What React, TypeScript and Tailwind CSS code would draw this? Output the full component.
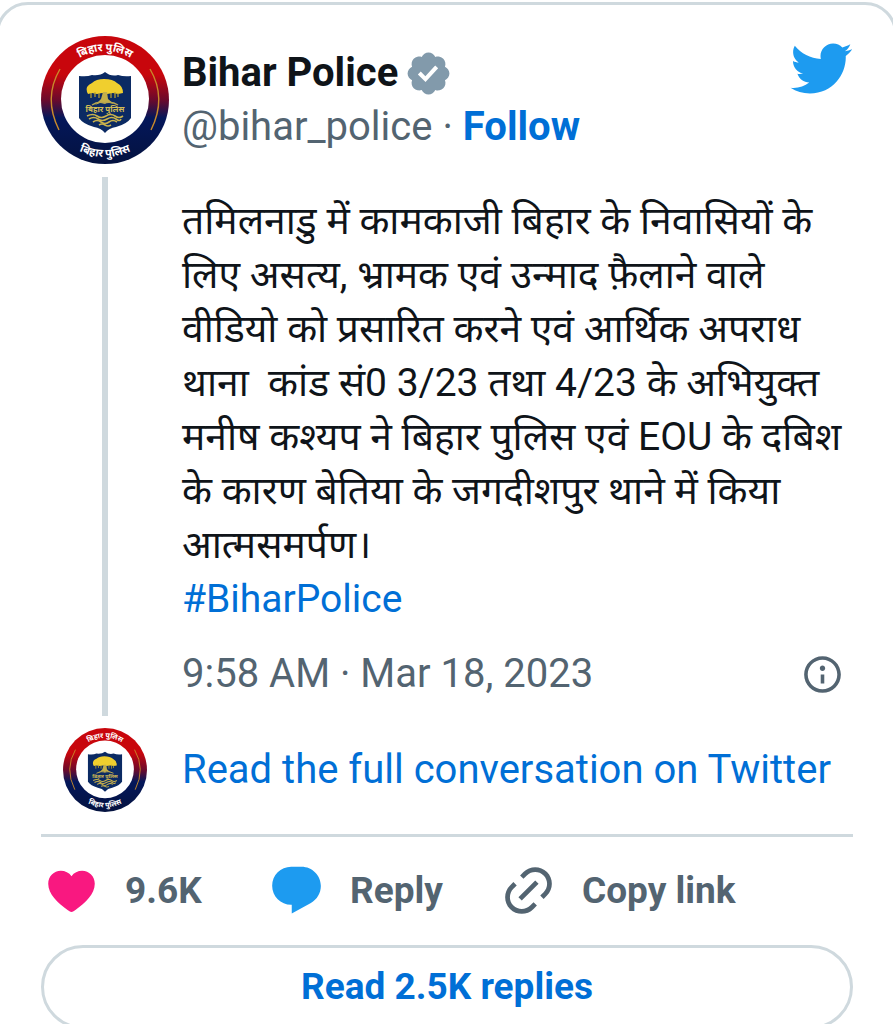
import { useId } from "react";

const tweetLines = [
  "तमिलनाडु में कामकाजी बिहार के निवासियों के",
  "लिए असत्य, भ्रामक एवं उन्माद फ़ैलाने वाले",
  "वीडियो को प्रसारित करने एवं आर्थिक अपराध",
  "थाना  कांड सं0 3/23 तथा 4/23 के अभियुक्त",
  "मनीष कश्यप ने बिहार पुलिस एवं EOU के दबिश",
  "के कारण बेतिया के जगदीशपुर थाने में किया",
  "आत्मसमर्पण।",
];

function Icon({ d, className, box = 24 }: { d: string; className: string; box?: number }) {
  return (
    <svg viewBox={`0 0 ${box} ${box}`} className={className} fill="currentColor" aria-hidden="true">
      <path d={d} />
    </svg>
  );
}

const icons = {
  bird: "M23.643 4.937c-.835.37-1.732.62-2.675.733.962-.576 1.7-1.49 2.048-2.578-.9.534-1.897.922-2.958 1.13-.85-.904-2.06-1.47-3.4-1.47-2.572 0-4.658 2.086-4.658 4.66 0 .364.042.718.12 1.06-3.873-.195-7.304-2.05-9.602-4.868-.4.69-.63 1.49-.63 2.342 0 1.616.823 3.043 2.072 3.878-.764-.025-1.482-.234-2.11-.583v.06c0 2.257 1.605 4.14 3.737 4.568-.392.106-.803.162-1.227.162-.3 0-.593-.028-.877-.082.593 1.85 2.313 3.198 4.352 3.234-1.595 1.25-3.604 1.995-5.786 1.995-.376 0-.747-.022-1.112-.065 2.062 1.323 4.51 2.093 7.14 2.093 8.57 0 13.255-7.098 13.255-13.254 0-.2-.005-.402-.014-.602.91-.658 1.7-1.477 2.323-2.41z",
  verified:
    "M20.396 11c-.018-.646-.215-1.275-.57-1.816-.354-.54-.852-.972-1.438-1.246.223-.607.27-1.264.14-1.897-.131-.634-.437-1.218-.882-1.687-.47-.445-1.053-.75-1.687-.882-.633-.13-1.29-.083-1.897.14-.273-.587-.704-1.086-1.245-1.44S11.647 1.62 11 1.604c-.646.017-1.273.213-1.813.568s-.969.854-1.24 1.44c-.608-.223-1.267-.272-1.902-.14-.635.13-1.22.436-1.69.882-.445.47-.749 1.055-.878 1.688-.13.633-.08 1.29.144 1.896-.587.274-1.087.705-1.443 1.245-.356.54-.555 1.17-.574 1.817.02.647.218 1.276.574 1.817.356.54.856.972 1.443 1.245-.224.606-.274 1.263-.144 1.896.13.634.433 1.218.877 1.688.47.443 1.054.747 1.687.878.633.132 1.29.084 1.897-.136.274.586.705 1.084 1.246 1.439.54.354 1.17.551 1.816.569.647-.016 1.276-.213 1.817-.567s.972-.854 1.245-1.44c.604.239 1.266.296 1.903.164.636-.132 1.22-.447 1.68-.907.46-.46.776-1.044.908-1.681s.075-1.299-.165-1.903c.586-.274 1.084-.705 1.439-1.246.354-.54.551-1.17.569-1.816zM9.662 14.85l-3.429-3.428 1.293-1.302 2.072 2.072 4.4-4.794 1.347 1.246z",
  info: "M13.5 8.5c0 .83-.67 1.5-1.5 1.5s-1.5-.67-1.5-1.5S11.17 7 12 7s1.5.67 1.5 1.5zM13 17v-5h-2v5h2zm-1 5.25c5.66 0 10.25-4.59 10.25-10.25S17.66 1.75 12 1.75 1.75 6.34 1.75 12 6.34 22.25 12 22.25zM20.25 12c0 4.56-3.69 8.25-8.25 8.25S3.75 16.56 3.75 12 7.44 3.75 12 3.75s8.25 3.69 8.25 8.25z",
  heart:
    "M12 21.1c-.5-.1-1.200-.6-1.8-1C6.200 17.2 2.200 13.600 2.200 9.200c0-3.200 2.400-5.500 5.300-5.500 1.800 0 3.500.8 4.500 2.300 1-1.500 2.700-2.300 4.500-2.300 2.900 0 5.300 2.300 5.300 5.500 0 4.400-4 8-8 10.900-.6.4-1.300.9-1.800 1z",
  reply:
    "M1.751 10c0-4.42 3.584-8 8.005-8h4.366c4.49 0 8.129 3.64 8.129 8.13 0 2.96-1.607 5.68-4.196 7.11l-8.054 4.46v-3.69h-.067c-4.49.1-8.183-3.51-8.183-8.01z",
  link: "M18.36 5.64c-1.95-1.96-5.11-1.96-7.07 0L9.88 7.05 8.46 5.64l1.42-1.42c2.73-2.73 7.16-2.73 9.9 0 2.73 2.74 2.73 7.17 0 9.9l-1.42 1.42-1.41-1.42 1.41-1.41c1.96-1.96 1.96-5.12 0-7.07zm-2.12 3.53l-7.07 7.07-1.41-1.41 7.07-7.07 1.41 1.41zm-12.02.71l1.42-1.42 1.41 1.42-1.41 1.41c-1.96 1.96-1.96 5.12 0 7.07 1.95 1.96 5.11 1.96 7.07 0l1.41-1.41 1.42 1.41-1.42 1.42c-2.73 2.73-7.16 2.73-9.9 0-2.73-2.74-2.73-7.17 0-9.9z",
};

function Avatar({ className }: { className: string }) {
  const id = useId();
  return (
    <svg viewBox="0 0 128 128" className={className} role="img" aria-label="Bihar Police">
      <defs>
        <linearGradient id={id + "ring"} x1="0" y1="0" x2="0" y2="1">
          <stop offset="0.3" stopColor="#c8060c" />
          <stop offset="0.5" stopColor="#6b0a2c" />
          <stop offset="0.64" stopColor="#04175a" />
          <stop offset="1" stopColor="#04123f" />
        </linearGradient>
        <path id={id + "top"} d="M15 64a49 49 0 0 1 98 0" />
        <path id={id + "bottom"} d="M7 64a57 57 0 0 0 114 0" />
      </defs>
      <circle cx="64" cy="64" r="64" fill={`url(#${id}ring)`} />
      <circle cx="64" cy="63" r="44" fill="#fff" />
      <g fill="none" stroke="#c98a2b" strokeWidth="1.4">
        <path d="M19 33Q2 62 18 94" />
        <path d="M109 33q17 29 1 61" />
      </g>
      <g fill="#fff" fontSize="11" fontWeight="700" textAnchor="middle">
        <text>
          <textPath href={`#${id}top`} startOffset="50%">बिहार पुलिस</textPath>
        </text>
        <text>
          <textPath href={`#${id}bottom`} startOffset="50%">बिहार पुलिस</textPath>
        </text>
      </g>
      {/* shield */}
      <path d="M38 40q8 1 13-1 8 1 13-3 6 5 13 3 6 2 13 1v42q-4 6-15 9-7 1-11 6-4-5-11-6-11-3-15-9z" fill="#0b2a63" />
      <path d="M46 56q-2-6 5-9 4-4 12-4 9 0 13 4 6 3 6 10l-5 1-5-1-6 1-5-1-5 1-5-1-4 1z" fill="#f0cf2e" />
      <path d="M50 57v5M54 56v5M58 57v5M70 57v5M74 56v6M77 57v4" stroke="#bda52f" strokeWidth="1.200" />
      <path d="M62 56h4l1 7 6 5-7-2-2 2-3-2-7 3 6-6z" fill="#c4b04a" />
      <path d="M51 69q6-4 12-2 8-2 14 2" fill="none" stroke="#b7a650" strokeWidth="1.500" />
      <text x="64" y="76" textAnchor="middle" fontSize="8" fontWeight="700" fill="#d3bd55">
        बिहार पुलिस
      </text>
      <g fill="none" stroke="#c9b24c" strokeWidth="1.600">
        <path d="M46 80q6-3 10 0t9 0 9 0 8 0" />
        <path d="M48 83q5-3 9 0t9 0 9 0 5 0" />
        <path d="M52 86q4-3 8 0t8 0 8 0" />
        <path d="M58 89q3-2 6 0t6 0" />
      </g>
    </svg>
  );
}

function App() {
  return (
    <div className="h-screen overflow-hidden bg-white pt-[2px] font-[Roboto,'Noto_Sans',sans-serif] text-[40px] leading-[54px] text-[#0f1419]">
      <article className="-mx-1 rounded-[32px] border-3 border-[#cfd9de] pt-[31px] pr-[41px] pb-8 pl-[42px]">
        <div className="flex gap-[13px]">
          <div className="flex w-32 shrink-0 flex-col items-center gap-[13px]">
            <Avatar className="size-32" />
            <div className="w-[6px] grow bg-[#cfd9de]" />
          </div>
          <div className="min-w-0 grow pb-[15px]">
            <header className="flex items-start justify-between">
              <div className="pt-[10px]">
                <div className="flex items-center gap-[6px]">
                  <a href="#profile" className="font-bold">Bihar Police</a>
                  <Icon d={icons.verified} box={22} className="size-[49px] text-[#829aab]" />
                </div>
                <div className="flex gap-[10px] text-[#536471]">
                  <a href="#profile">@bihar_police</a>
                  <span>·</span>
                  <a href="#follow" className="font-bold text-[#006fd6]">Follow</a>
                </div>
              </div>
              <a href="#tweet" aria-label="View on Twitter">
                <Icon d={icons.bird} className="size-[65px] text-[#1d9bf0]" />
              </a>
            </header>
            <div className="mt-10 text-[39px]">
              {tweetLines.map((line) => (
                <p key={line} className="whitespace-pre">{line}</p>
              ))}
              <a href="#hashtag" className="text-[#006fd6]">#BiharPolice</a>
            </div>
            <div className="mt-[21px] flex items-center justify-between pr-[9px] text-[#536471]">
              <a href="#tweet">9:58 AM · Mar 18, 2023</a>
              <a href="#privacy" aria-label="Twitter Ads info and privacy">
                <Icon d={icons.info} className="size-[43px]" />
              </a>
            </div>
          </div>
        </div>

        <div className="mt-3 flex items-center gap-[13px]">
          <div className="flex w-32 shrink-0 justify-center">
            <Avatar className="size-[84px]" />
          </div>
          <a href="#conversation" className="text-[#006fd6]">Read the full conversation on Twitter</a>
        </div>

        <div className="mt-[22px] flex items-center gap-[57px] border-t-3 border-[#cfd9de] pt-[25px] text-[37px] font-bold text-[#536471]">
          <button type="button" className="flex items-center gap-[25px] pl-[2px]">
            <Icon d={icons.heart} className="size-[57px] text-[#f91880]" />
            <span className="min-w-[86px] text-left">9.6K</span>
          </button>
          <button type="button" className="flex items-center gap-[25px]">
            <Icon d={icons.reply} className="size-[57px] text-[#1d9bf0]" />
            Reply
          </button>
          <button type="button" className="flex items-center gap-[25px]">
            <Icon d={icons.link} className="size-[57px]" />
            Copy link
          </button>
        </div>

        <a
          href="#replies"
          className="mt-[26px] flex h-[84px] items-center justify-center rounded-full border-3 border-[#cfd9de] text-[37px] font-bold text-[#006fd6]"
        >
          Read 2.5K replies
        </a>
      </article>
    </div>
  );
}

export default App;
